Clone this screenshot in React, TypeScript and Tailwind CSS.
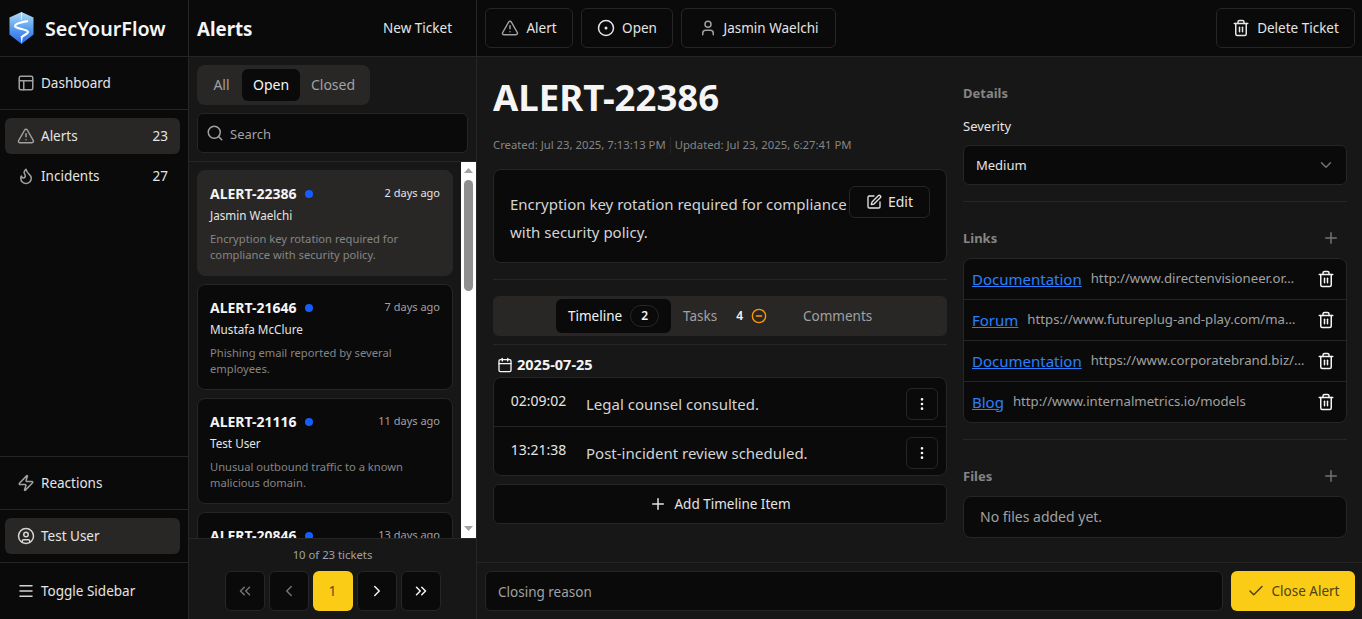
import React from "react";
import {
  Calendar,
  Check,
  ChevronDown,
  ChevronLeft,
  ChevronRight,
  ChevronsLeft,
  ChevronsRight,
  CircleDot,
  CircleMinus,
  CircleUser,
  EllipsisVertical,
  Flame,
  Menu,
  PanelsTopLeft,
  Plus,
  Search,
  SquarePen,
  Trash2,
  TriangleAlert,
  User,
  Zap,
} from "lucide-react";

const tickets = [
  { id: "ALERT-22386", age: "2 days ago", owner: "Jasmin Waelchi", text: "Encryption key rotation required for compliance with security policy." },
  { id: "ALERT-21646", age: "7 days ago", owner: "Mustafa McClure", text: "Phishing email reported by several employees." },
  { id: "ALERT-21116", age: "11 days ago", owner: "Test User", text: "Unusual outbound traffic to a known malicious domain." },
  { id: "ALERT-20846", age: "13 days ago", owner: "Test User", text: "Multiple failed login attempts detected on a service account." },
];

const links = [
  { name: "Documentation", url: "http://www.directenvisioneer.or…" },
  { name: "Forum", url: "https://www.futureplug-and-play.com/ma…" },
  { name: "Documentation", url: "https://www.corporatebrand.biz/…" },
  { name: "Blog", url: "http://www.internalmetrics.io/models" },
];

function Logo() {
  return (
    <svg width="25" height="32" viewBox="0 0 25 32" className="shrink-0">
      <defs>
        <linearGradient id="shield" x1="0" y1="0" x2="0" y2="1">
          <stop offset="0" stopColor="#b4dcf3" />
          <stop offset="0.5" stopColor="#5aa0ee" />
          <stop offset="1" stopColor="#2a66ee" />
        </linearGradient>
      </defs>
      <path d="M12.5 0 L24.5 5.5 V22.5 L12.5 32 L0.5 22.5 V5.5 Z" fill="url(#shield)" />
      <path d="M12.5 0 V8" stroke="#ffffff" strokeWidth="0.8" opacity="0.8" />
      <path
        d="M19 9 C14 10 6 11 6 14 C6 17 19 17 19 20 C19 22 14 23 13 25"
        fill="none"
        stroke="#ffffff"
        strokeWidth="2.2"
      />
      <path d="M11.6 24 L14 24 L12.6 32 Z" fill="#ffffff" />
    </svg>
  );
}

function NavItem({
  icon,
  label,
  count,
  active,
}: {
  icon: React.ReactNode;
  label: string;
  count?: string;
  active?: boolean;
}) {
  return (
    <div
      className={`flex h-9 items-center gap-1.5 rounded-md px-3 text-[13.5px] text-neutral-200 ${
        active ? "bg-[#292726]" : ""
      }`}
    >
      {icon}
      <span className="flex-1">{label}</span>
      {count && <span>{count}</span>}
    </div>
  );
}

function OutlineButton({ children, className = "" }: { children: React.ReactNode; className?: string }) {
  return (
    <div
      className={`flex h-10 items-center justify-center gap-[7px] rounded-md border border-[#262626] bg-[#0a0a0a] text-[13.5px] text-neutral-200 ${className}`}
    >
      {children}
    </div>
  );
}

function TicketCard({ id, age, owner, text, active }: (typeof tickets)[number] & { active?: boolean }) {
  return (
    <div
      className={`flex h-[106px] shrink-0 flex-col rounded-lg border px-3 pt-[14px] ${
        active ? "border-[#292726] bg-[#292726]" : "border-[#262626] bg-[#0a0a0a]"
      }`}
    >
      <div className="flex h-[17px] items-center">
        <span className="text-sm font-bold text-neutral-100">{id}</span>
        <span className="ml-2 size-2 rounded-full bg-blue-600" />
        <span className={`ml-auto text-[11px] ${active ? "text-neutral-200" : "text-neutral-400"}`}>{age}</span>
      </div>
      <div className="mt-[5px] text-[11.7px] leading-4 text-neutral-200">{owner}</div>
      <div className="mt-2 text-[11.2px] leading-4 text-[#858585]">{text}</div>
    </div>
  );
}

function Scrollbar() {
  return (
    <div className="flex w-[15px] shrink-0 flex-col items-center bg-white pb-[7px] pt-[6px]">
      <svg width="9" height="5" viewBox="0 0 9 5">
        <path d="M4.5 0 L9 5 H0 Z" fill="#a3a3a3" />
      </svg>
      <div className="mt-[7px] h-[111px] w-[9px] rounded-full bg-[#8f8f8f]" />
      <svg width="9" height="5" viewBox="0 0 9 5" className="mt-auto">
        <path d="M0 0 H9 L4.5 5 Z" fill="#a3a3a3" />
      </svg>
    </div>
  );
}

function PageButton({ children, muted }: { children: React.ReactNode; muted?: boolean }) {
  return (
    <div
      className={`flex size-10 items-center justify-center rounded-md border border-[#262626] bg-[#0a0a0a] ${
        muted ? "text-neutral-500" : "text-neutral-100"
      }`}
    >
      {children}
    </div>
  );
}

function TimelineRow({ time, text }: { time: string; text: string }) {
  return (
    <div className="box-content flex h-12 items-center pl-3 pr-2 pt-0">
      <span className="w-[65px] -translate-y-px text-center text-sm text-neutral-200">{time}</span>
      <span className="ml-[15px] flex-1 translate-y-[2px] text-[15px] text-neutral-300">{text}</span>
      <div className="flex size-8 translate-y-[2px] items-center justify-center rounded-md border border-[#262626] text-neutral-100">
        <EllipsisVertical size={16} />
      </div>
    </div>
  );
}

function SectionTitle({ title, add }: { title: string; add?: boolean }) {
  return (
    <div className="flex h-5 items-center justify-between">
      <span className="pt-px text-[13px] font-bold text-[#858585]">{title}</span>
      {add && <Plus size={18} className="mr-[7px] text-neutral-500" />}
    </div>
  );
}

export default function App() {
  return (
    <div className="flex h-screen w-full overflow-hidden bg-[#171717] font-['Noto_Sans',sans-serif] text-neutral-200">
      {/* sidebar */}
      <aside className="flex w-[189px] shrink-0 flex-col border-r border-[#262626] bg-[#0a0a0a]">
        <div className="flex h-[57px] shrink-0 items-center gap-[11px] border-b border-[#262626] pl-[9px]">
          <Logo />
          <span className="pt-px text-[19.7px] font-semibold text-neutral-100">SecYourFlow</span>
        </div>
        <div className="flex h-[53px] shrink-0 flex-col justify-center border-b border-[#262626] pl-[5px] pr-2">
          <NavItem icon={<PanelsTopLeft size={18} className="text-neutral-400" />} label="Dashboard" />
        </div>
        <div className="flex flex-1 flex-col gap-1 pl-[5px] pr-2 pt-2">
          <NavItem active icon={<TriangleAlert size={18} className="text-neutral-400" />} label="Alerts" count="23" />
          <NavItem icon={<Flame size={18} className="text-neutral-400" />} label="Incidents" count="27" />
        </div>
        <div className="flex h-[53px] shrink-0 flex-col justify-center border-t border-[#262626] pl-[5px] pr-2">
          <NavItem icon={<Zap size={18} className="text-neutral-400" />} label="Reactions" />
        </div>
        <div className="flex h-[53px] shrink-0 flex-col justify-center border-t border-[#262626] pl-[5px] pr-2">
          <NavItem active icon={<CircleUser size={18} className="text-neutral-300" />} label="Test User" />
        </div>
        <div className="flex h-[57px] shrink-0 flex-col justify-center border-t border-[#262626] pl-[5px] pr-2">
          <NavItem icon={<Menu size={18} className="text-neutral-300" />} label="Toggle Sidebar" />
        </div>
      </aside>

      {/* ticket list */}
      <section className="flex w-[288px] shrink-0 flex-col border-r border-[#262626]">
        <div className="flex h-[57px] shrink-0 items-center justify-between border-b border-[#262626] bg-[#0a0a0a] pl-2 pr-6">
          <span className="pt-0.5 text-[18.7px] font-bold text-neutral-100">Alerts</span>
          <span className="text-[13.5px] text-neutral-200">New Ticket</span>
        </div>
        <div className="flex h-[105px] shrink-0 flex-col gap-2 border-b border-[#262626] px-2 pt-2">
          <div className="flex h-10 w-[173px] items-center rounded-lg bg-[#292726] px-1 text-sm text-neutral-400">
            <span className="w-[41px] text-center">All</span>
            <span className="flex h-8 w-[58px] items-center justify-center rounded-md bg-[#0a0a0a] text-neutral-100">
              Open
            </span>
            <span className="w-[66px] text-center">Closed</span>
          </div>
          <div className="flex h-10 w-[271px] items-center gap-1.5 rounded-md border border-[#262626] bg-[#0a0a0a] px-2 text-[13px] text-neutral-400">
            <Search size={18} />
            <span className="pt-1">Search</span>
          </div>
        </div>
        <div className="flex min-h-0 flex-1">
          <div className="flex min-w-0 flex-1 flex-col gap-2 overflow-hidden px-2 pt-2">
            {tickets.map((t, i) => (
              <TicketCard key={t.id} {...t} active={i === 0} />
            ))}
          </div>
          <Scrollbar />
        </div>
        <div className="flex h-[81px] shrink-0 flex-col items-center border-t border-[#262626] pt-2">
          <span className="h-[24px] text-[11.3px] leading-4 text-neutral-400">10 of 23 tickets</span>
          <div className="flex gap-1">
            <PageButton muted>
              <ChevronsLeft size={18} />
            </PageButton>
            <PageButton muted>
              <ChevronLeft size={18} />
            </PageButton>
            <div className="flex size-10 items-center justify-center rounded-md bg-[#facc15] text-sm text-[#5a4c10]">
              1
            </div>
            <PageButton>
              <ChevronRight size={18} />
            </PageButton>
            <PageButton>
              <ChevronsRight size={18} />
            </PageButton>
          </div>
        </div>
      </section>

      {/* detail */}
      <main className="flex min-w-0 flex-1 flex-col">
        <header className="flex h-[57px] shrink-0 items-center gap-2 border-b border-[#262626] bg-[#0a0a0a] pl-2 pr-[7px]">
          <OutlineButton className="w-[88px]">
            <TriangleAlert size={18} className="text-neutral-400" />
            Alert
          </OutlineButton>
          <OutlineButton className="w-[92px]">
            <CircleDot size={18} />
            Open
          </OutlineButton>
          <OutlineButton className="w-[155px]">
            <User size={18} className="text-neutral-400" />
            Jasmin Waelchi
          </OutlineButton>
          <OutlineButton className="ml-auto w-[139px]">
            <Trash2 size={18} />
            Delete Ticket
          </OutlineButton>
        </header>

        <div className="flex min-h-0 flex-1 gap-4 pl-4 pr-[15px]">
          <div className="flex w-[454px] shrink-0 flex-col">
            <h1 className="mt-[17px] h-[49px] text-[36.6px] font-bold leading-[46px] text-neutral-100">ALERT-22386</h1>
            <div className="mt-[14px] flex h-4 items-center text-[11.3px] text-[#858585]">
              <span>Created: Jul 23, 2025, 7:13:13 PM</span>
              <span className="mx-1 h-4 w-px bg-[#262626]" />
              <span>Updated: Jul 23, 2025, 6:27:41 PM</span>
            </div>
            <div className="mt-4 flex h-[94px] items-start rounded-lg border border-[#262626] bg-[#0a0a0a] pl-4 pr-4 pt-5">
              <p className="w-[339px] text-[15px] leading-7 text-neutral-300">
                Encryption key rotation required for compliance with security policy.
              </p>
              <div className="-mt-[4px] flex h-8 w-[81px] items-center justify-center gap-1.5 rounded-md border border-[#262626] text-sm text-neutral-200">
                <SquarePen size={16} />
                Edit
              </div>
            </div>
            <div className="mt-4 h-px bg-[#262626]" />
            <div className="mt-4 flex h-10 items-center rounded-md bg-[#292726] pl-[63px] text-[13.5px] text-neutral-400">
              <div className="flex h-[34px] w-[115px] items-center gap-2 rounded-md bg-[#0a0a0a] pl-3 text-neutral-100">
                Timeline
                <span className="flex h-[22px] w-[29px] items-center justify-center rounded-full border border-[#262626] text-xs font-semibold">
                  2
                </span>
              </div>
              <span className="ml-3">Tasks</span>
              <span className="ml-[19px] text-xs font-semibold text-neutral-100">4</span>
              <CircleMinus size={16} className="ml-2 text-amber-500" />
              <span className="ml-9">Comments</span>
            </div>
            <div className="mt-2 h-px bg-[#262626]" />
            <div className="mt-[10px] flex h-5 items-center gap-1 pl-1 text-[14.5px] font-bold text-neutral-100">
              <Calendar size={16} />
              2025-07-25
            </div>
            <div className="mt-[2px] flex flex-col divide-y divide-[#262626] rounded-lg border border-[#262626] bg-[#0a0a0a]">
              <TimelineRow time="02:09:02" text="Legal counsel consulted." />
              <TimelineRow time="13:21:38" text="Post-incident review scheduled." />
            </div>
            <OutlineButton className="mt-2 shrink-0 rounded-lg">
              <Plus size={18} />
              Add Timeline Item
            </OutlineButton>
          </div>

          <div className="flex min-w-0 flex-1 flex-col pt-[26px]">
            <SectionTitle title="Details" />
            <div className="mt-[13px] text-[13px] leading-5 text-neutral-200">Severity</div>
            <div className="mt-[9px] flex h-10 items-center justify-between rounded-md border border-[#262626] bg-[#0a0a0a] pl-3 pr-[11px] text-[13px] text-neutral-200">
              <span className="pt-px">Medium</span>
              <ChevronDown size={18} className="text-neutral-500" />
            </div>
            <div className="mt-4 h-px bg-[#262626]" />
            <div className="mt-[26px]">
              <SectionTitle title="Links" add />
            </div>
            <div className="mt-[10px] flex flex-col divide-y divide-[#262626] rounded-lg border border-[#262626] bg-[#0a0a0a]">
              {links.map((l, i) => (
                <div key={i} className="box-content flex h-10 items-center gap-[9px] pl-2 pr-[11px]">
                  <span className="shrink-0 text-[15px] text-blue-500 underline">{l.name}</span>
                  <span className="min-w-0 flex-1 truncate text-[13.2px] text-neutral-400">{l.url}</span>
                  <Trash2 size={18} className="shrink-0 text-neutral-100" />
                </div>
              ))}
            </div>
            <div className="mt-4 h-px bg-[#262626]" />
            <div className="mt-[26px]">
              <SectionTitle title="Files" add />
            </div>
            <div className="mt-[10px] flex h-[42px] items-center rounded-lg border border-[#262626] bg-[#0a0a0a] pl-4 text-sm text-neutral-400">
              No files added yet.
            </div>
          </div>
        </div>

        <footer className="flex h-[57px] shrink-0 items-center gap-2 border-t border-[#262626] pl-2 pr-[7px]">
          <div className="flex h-10 flex-1 items-center rounded-md border border-[#262626] bg-[#0a0a0a] px-3 text-[13.5px] text-neutral-400">
            <span className="pt-0.5">Closing reason</span>
          </div>
          <div className="flex h-10 w-[124px] items-center justify-center gap-[7px] rounded-md bg-[#facc15] text-[13.5px] text-[#4d4210]">
            <Check size={18} />
            Close Alert
          </div>
        </footer>
      </main>
    </div>
  );
}
